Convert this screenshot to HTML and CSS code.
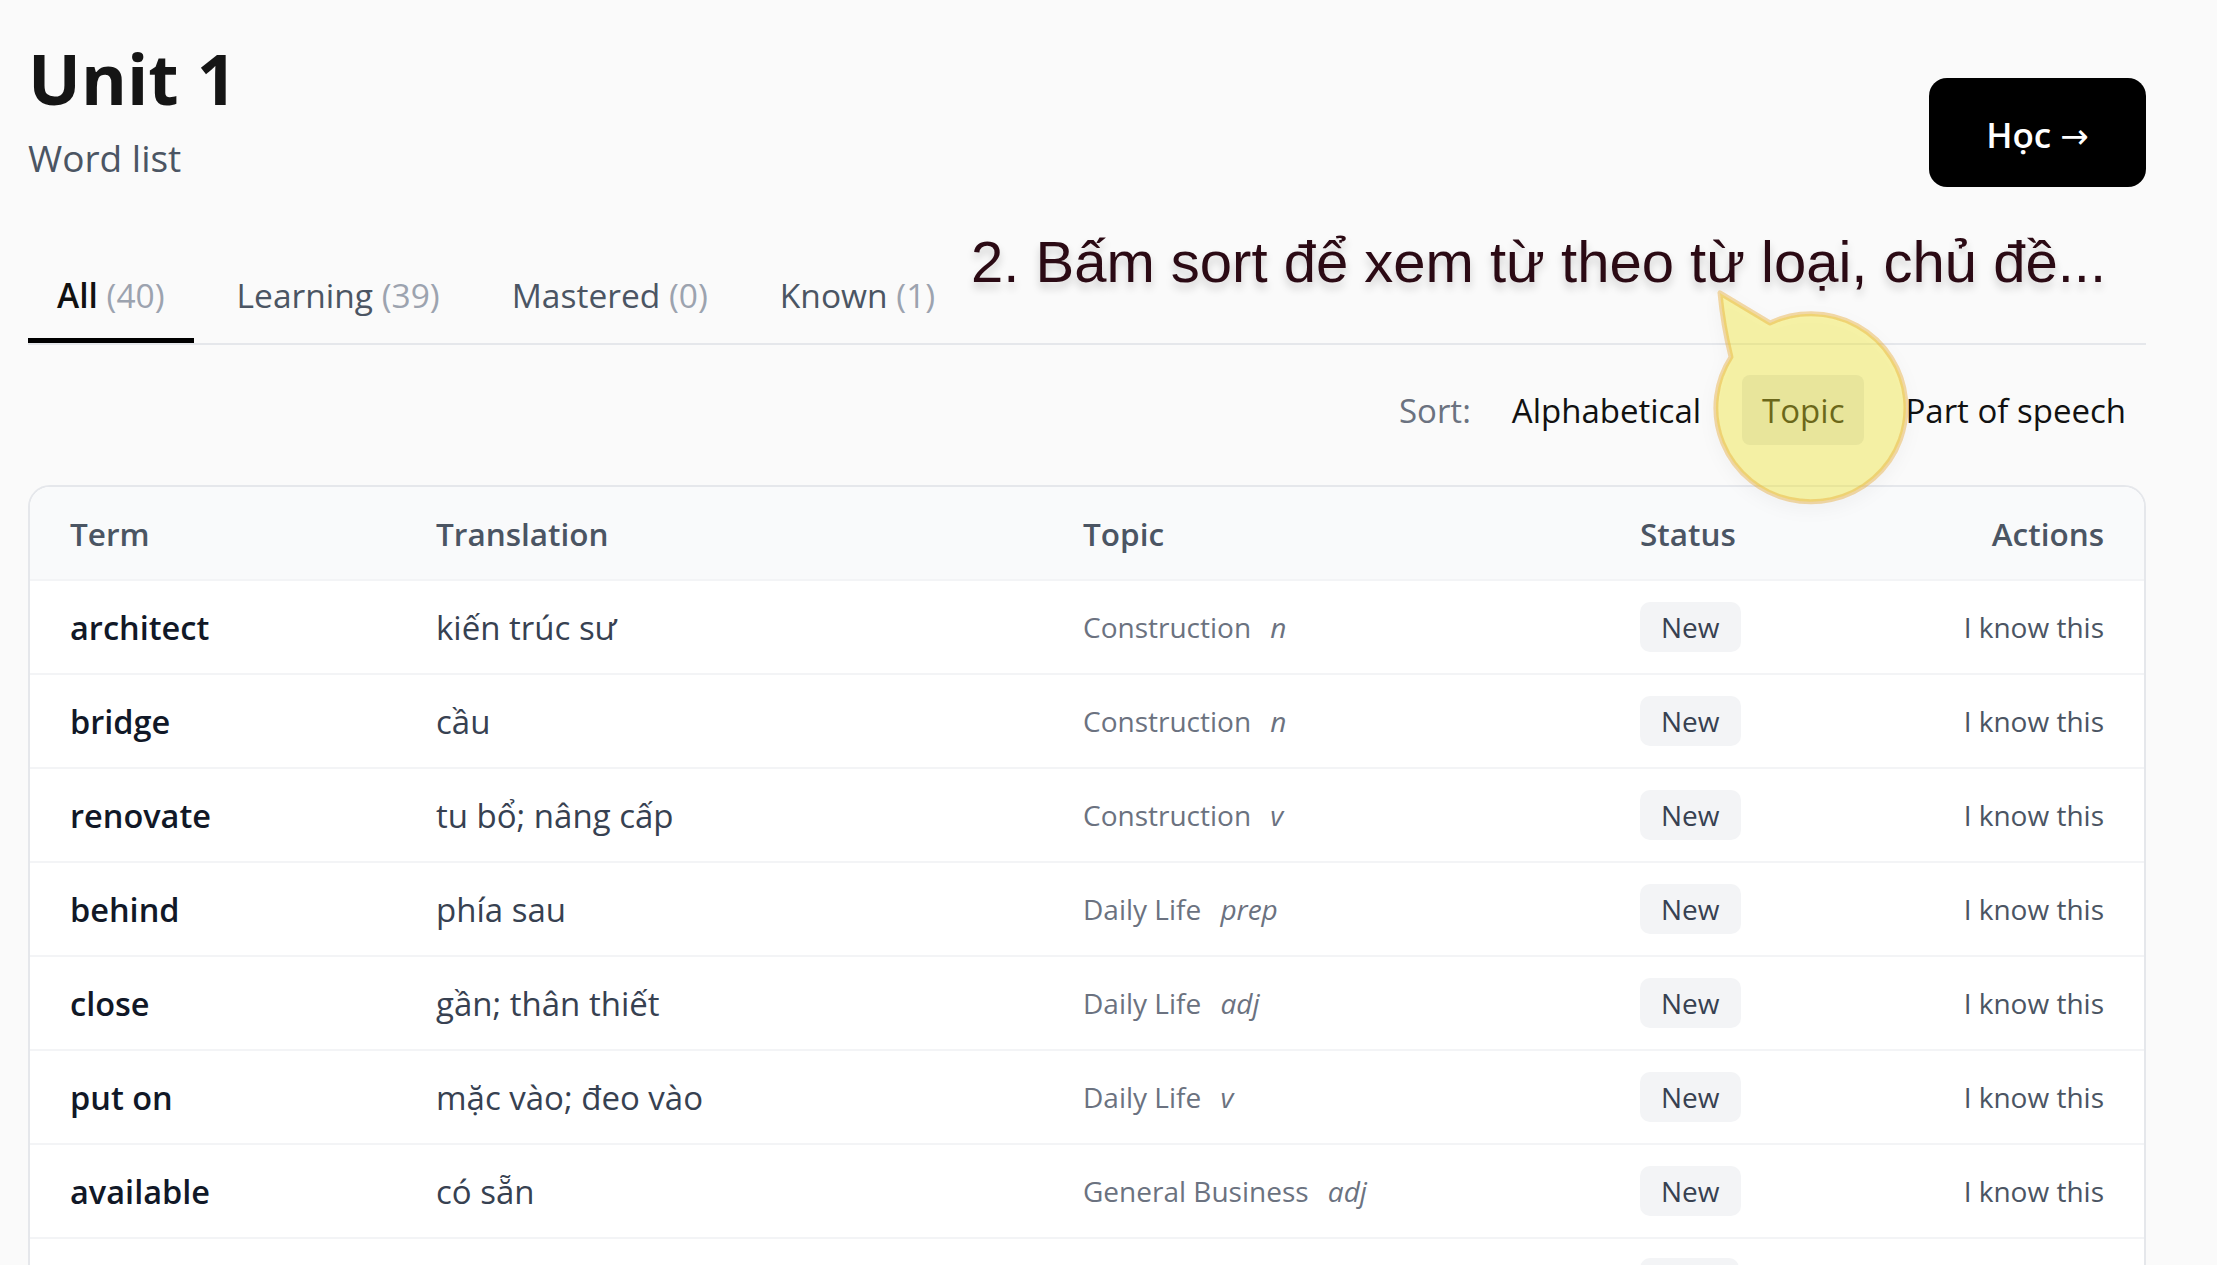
FILE: index.html
```html
<!DOCTYPE html>
<html lang="vi">
<head>
    <meta charset="UTF-8">
    <meta name="viewport" content="width=device-width, initial-scale=1.0">
    <title>Unit 1 - Word list</title>
    <link rel="stylesheet" href="styles.css">
</head>
<body>
    <div class="page">
        <header class="head">
            <div>
                <h1 class="title">Unit 1</h1>
                <p class="subtitle">Word list</p>
            </div>
            <button class="study">Học <span class="arrow">→</span></button>
        </header>

        <nav class="tabs">
            <a class="tab active">All <span class="count">(40)</span></a>
            <a class="tab">Learning <span class="count">(39)</span></a>
            <a class="tab">Mastered <span class="count">(0)</span></a>
            <a class="tab">Known <span class="count">(1)</span></a>
        </nav>

        <div class="sort">
            <span class="sort-label">Sort:</span>
            <button class="sort-btn">Alphabetical</button>
            <button class="sort-btn current">Topic</button>
            <button class="sort-btn">Part of speech</button>
        </div>

        <div class="card">
            <table class="words">
                <colgroup>
                    <col class="c-term">
                    <col class="c-trans">
                    <col class="c-topic">
                    <col class="c-status">
                    <col class="c-actions">
                </colgroup>
                <thead>
                    <tr>
                        <th>Term</th>
                        <th>Translation</th>
                        <th>Topic</th>
                        <th>Status</th>
                        <th class="right">Actions</th>
                    </tr>
                </thead>
                <tbody>
                    <tr>
                        <td class="term">architect</td>
                        <td class="trans">kiến trúc sư</td>
                        <td class="topic">Construction <i class="pos">n</i></td>
                        <td><span class="badge">New</span></td>
                        <td class="right action">I know this</td>
                    </tr>
                    <tr>
                        <td class="term">bridge</td>
                        <td class="trans">cầu</td>
                        <td class="topic">Construction <i class="pos">n</i></td>
                        <td><span class="badge">New</span></td>
                        <td class="right action">I know this</td>
                    </tr>
                    <tr>
                        <td class="term">renovate</td>
                        <td class="trans">tu bổ; nâng cấp</td>
                        <td class="topic">Construction <i class="pos">v</i></td>
                        <td><span class="badge">New</span></td>
                        <td class="right action">I know this</td>
                    </tr>
                    <tr>
                        <td class="term">behind</td>
                        <td class="trans">phía sau</td>
                        <td class="topic">Daily Life <i class="pos">prep</i></td>
                        <td><span class="badge">New</span></td>
                        <td class="right action">I know this</td>
                    </tr>
                    <tr>
                        <td class="term">close</td>
                        <td class="trans">gần; thân thiết</td>
                        <td class="topic">Daily Life <i class="pos">adj</i></td>
                        <td><span class="badge">New</span></td>
                        <td class="right action">I know this</td>
                    </tr>
                    <tr>
                        <td class="term">put on</td>
                        <td class="trans">mặc vào; đeo vào</td>
                        <td class="topic">Daily Life <i class="pos">v</i></td>
                        <td><span class="badge">New</span></td>
                        <td class="right action">I know this</td>
                    </tr>
                    <tr>
                        <td class="term">available</td>
                        <td class="trans">có sẵn</td>
                        <td class="topic">General Business <i class="pos">adj</i></td>
                        <td><span class="badge">New</span></td>
                        <td class="right action">I know this</td>
                    </tr>
                    <tr class="last">
                        <td></td>
                        <td></td>
                        <td></td>
                        <td><span class="badge"></span></td>
                        <td></td>
                    </tr>
                </tbody>
            </table>
        </div>

        <p class="hint">2. Bấm sort để xem từ theo từ loại, chủ đề...</p>
        <svg class="bubble" width="240" height="250" viewBox="0 0 240 250">
            <path d="M 80 43 L 30 13 Q 33 45 41 77 A 95 94 0 1 0 80 43 Z" fill="rgba(245,235,45,0.4)" stroke="rgba(230,165,40,0.4)" stroke-width="5" stroke-linejoin="round"/>
        </svg>
    </div>
</body>
</html>
```

FILE: styles.css
```css
body {
    margin: 0;
    background-color: #fafafa;
    font-family: "Open Sans", "Noto Sans", sans-serif;
    color: #111827;
}
.page {
    position: relative;
    padding: 38px 71px 0 28px;
}
.head {
    display: flex;
    justify-content: space-between;
    align-items: flex-start;
}
.title {
    margin: 0;
    font-size: 70px;
    line-height: 80px;
    font-weight: 700;
    color: #151515;
}
.subtitle {
    margin: 16px 0 0;
    font-size: 37px;
    line-height: 48px;
    color: #4b5563;
}
.study {
    margin-top: 40px;
    width: 217px;
    height: 109px;
    padding-top: 4px;
    border: none;
    border-radius: 18px;
    background-color: #000;
    color: #fff;
    font-family: inherit;
    font-size: 35px;
    font-weight: 600;
}
.arrow {
    font-family: "DejaVu Sans", sans-serif;
    font-weight: 400;
    font-size: 34px;
}
.tabs {
    display: flex;
    gap: 14px;
    margin-top: 65px;
    border-bottom: 2px solid #e5e7eb;
}
.tab {
    padding: 20px 29px;
    border-bottom: 5px solid transparent;
    font-size: 33.5px;
    line-height: 46px;
    color: #4b5563;
}
.tab.active {
    border-bottom-color: #000;
    color: #111;
    font-weight: 600;
}
.count {
    color: #9ca3af;
    font-weight: 400;
}
.sort {
    display: flex;
    justify-content: flex-end;
    align-items: center;
    gap: 21px;
    margin-top: 30px;
}
.sort-label {
    font-size: 33px;
    color: #6b7280;
}
.sort-btn {
    height: 70px;
    padding: 0 20px;
    border: none;
    border-radius: 8px;
    background: transparent;
    font-family: inherit;
    font-size: 33px;
    color: #111;
}
.sort-btn.current {
    background-color: #e5e7eb;
}
.card {
    margin-top: 40px;
    border: 2px solid #e5e7eb;
    border-radius: 22px;
    overflow: hidden;
    background-color: #fff;
}
.words {
    width: 100%;
    border-collapse: collapse;
    table-layout: fixed;
}
.c-term { width: 366px; }
.c-trans { width: 647px; }
.c-topic { width: 557px; }
.c-status { width: 300px; }
.c-actions { width: 244px; }
th {
    height: 92px;
    padding: 0 40px;
    background-color: #f9fafb;
    border-bottom: 2px solid #f3f4f6;
    text-align: left;
    font-size: 31.5px;
    font-weight: 600;
    color: #4b5563;
}
td {
    height: 92px;
    padding: 0 40px;
    border-bottom: 2px solid #f3f4f6;
    white-space: nowrap;
}
.right {
    text-align: right;
}
.term {
    font-size: 32.5px;
    font-weight: 600;
    color: #111827;
}
.trans {
    font-size: 33px;
    color: #374151;
}
.topic {
    font-size: 28px;
    color: #6b7280;
}
.pos {
    margin-left: 12px;
}
.badge {
    display: inline-flex;
    align-items: center;
    height: 50px;
    padding: 0 21px;
    border-radius: 10px;
    background-color: #f3f4f6;
    font-size: 28px;
    color: #374151;
}
.last .badge {
    width: 57px;
}
.action {
    font-size: 28px;
    color: #4b5563;
}
.hint {
    position: absolute;
    left: 971px;
    top: 233px;
    margin: 0;
    font-family: "Liberation Sans", Arial, sans-serif;
    font-size: 58px;
    line-height: 1;
    color: #2b0a14;
    text-shadow: 0 6px 8px rgba(0, 0, 0, 0.18);
    white-space: nowrap;
}
.bubble {
    position: absolute;
    left: 1690px;
    top: 280px;
    pointer-events: none;
    filter: drop-shadow(0 6px 8px rgba(0, 0, 0, 0.08));
}
```
